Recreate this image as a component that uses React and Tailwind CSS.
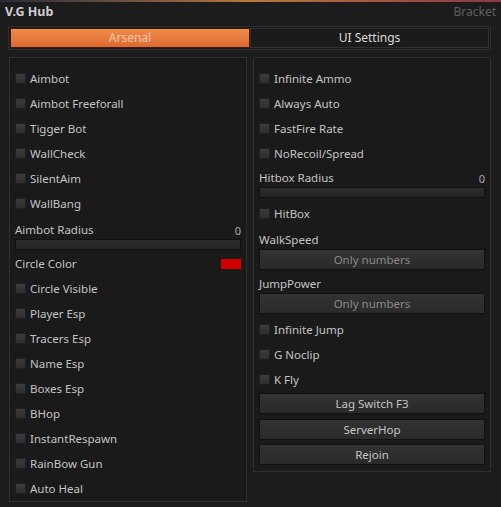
import React from "react";

const font = { fontFamily: '"Noto Sans", "Open Sans", sans-serif' };

function Check({ label, className = "" }) {
  return (
    <div className={`flex h-[25px] items-center gap-[4px] ${className}`}>
      <div className="h-[11px] w-[11px] border border-[#202020] bg-gradient-to-b from-[#3c3c3c] to-[#2e2e2e]" />
      <span className="text-[11.5px] leading-none text-[#c4c4c4]">{label}</span>
    </div>
  );
}

function Slider({ label, className = "" }) {
  return (
    <div className={className}>
      <div className="flex h-[16px] items-center justify-between">
        <span className="text-[11.5px] leading-none text-[#c4c4c4]">{label}</span>
        <span className="text-[11px] leading-none text-[#aaa]">0</span>
      </div>
      <div className="mt-[1px] h-[11px] border border-[#111] bg-gradient-to-b from-[#2d2d2d] to-[#252525]" />
    </div>
  );
}

function TextBox({ label, className = "" }) {
  return (
    <div className={className}>
      <div className="flex h-[16px] items-center">
        <span className="text-[11.5px] leading-none text-[#c4c4c4]">{label}</span>
      </div>
      <div className="mt-[1px] flex h-[21px] items-center justify-center border border-[#111] bg-gradient-to-b from-[#333] to-[#2a2a2a]">
        <span className="text-[11.5px] leading-none text-[#8a8a8a]">Only numbers</span>
      </div>
    </div>
  );
}

function Button({ label, className = "" }) {
  return (
    <div className={`flex h-[21px] items-center justify-center border border-[#111] bg-gradient-to-b from-[#333] to-[#2a2a2a] ${className}`}>
      <span className="text-[11.5px] leading-none text-[#c4c4c4]">{label}</span>
    </div>
  );
}

export default function App() {
  return (
    <div className="relative h-[507px] w-[501px] overflow-hidden bg-[#1c1c1c]" style={font}>
      <div className="h-[2px] w-full bg-gradient-to-r from-[#2a2a3a] via-[#b87838] to-[#8a3848]" />
      <div className="flex h-[20px] items-center justify-between px-[5px]">
        <span className="text-[12.5px] font-bold leading-none text-[#cfcfcf]">V.G Hub</span>
        <span className="text-[12px] leading-none text-[#5f5f5f]">Bracket</span>
      </div>
      <div className="ml-[8px] mt-[4px] flex h-[24px] w-[483px] border border-[#2e2e2e] bg-[#1a1a1a] p-[1px]">
        <div className="flex w-[240px] items-center justify-center border border-[#3a1a08] bg-gradient-to-b from-[#f08b4c] to-[#dd6a30]">
          <span className="text-[12px] leading-none text-[#f3c9ad]">Arsenal</span>
        </div>
        <div className="flex flex-1 items-center justify-center border border-[#303030] bg-[#1b1b1b]">
          <span className="text-[12px] leading-none text-[#dadada]">UI Settings</span>
        </div>
      </div>
      <div className="ml-[9px] mt-[7px] flex items-start gap-[6px]">
        <div className="h-[445px] w-[238px] border border-[#2f2f2f] bg-[#1a1a1a] px-[5px] pt-[8px]">
          <Check label="Aimbot" />
          <Check label="Aimbot Freeforall" />
          <Check label="Tigger Bot" />
          <Check label="WallCheck" />
          <Check label="SilentAim" />
          <Check label="WallBang" />
          <Slider label="Aimbot Radius" className="mt-[6px]" />
          <div className="mt-[1px] flex h-[25px] items-center justify-between">
            <span className="text-[11.5px] leading-none text-[#c4c4c4]">Circle Color</span>
            <div className="h-[10px] w-[20px] bg-[#d40000]" />
          </div>
          <Check label="Circle Visible" />
          <Check label="Player Esp" />
          <Check label="Tracers Esp" />
          <Check label="Name Esp" />
          <Check label="Boxes Esp" />
          <Check label="BHop" />
          <Check label="InstantRespawn" />
          <Check label="RainBow Gun" />
          <Check label="Auto Heal" />
        </div>
        <div className="h-[415px] w-[238px] border border-[#2f2f2f] bg-[#1a1a1a] px-[5px] pt-[8px]">
          <Check label="Infinite Ammo" />
          <Check label="Always Auto" />
          <Check label="FastFire Rate" />
          <Check label="NoRecoil/Spread" />
          <Slider label="Hitbox Radius" className="mt-[4px]" />
          <Check label="HitBox" className="mt-[3px]" />
          <TextBox label="WalkSpeed" className="mt-[6px]" />
          <TextBox label="JumpPower" className="mt-[6px]" />
          <Check label="Infinite Jump" className="mt-[3px]" />
          <Check label="G Noclip" />
          <Check label="K Fly" />
          <Button label="Lag Switch F3" className="mt-[1px]" />
          <Button label="ServerHop" className="mt-[5px]" />
          <Button label="Rejoin" className="mt-[4px]" />
        </div>
      </div>
    </div>
  );
}
